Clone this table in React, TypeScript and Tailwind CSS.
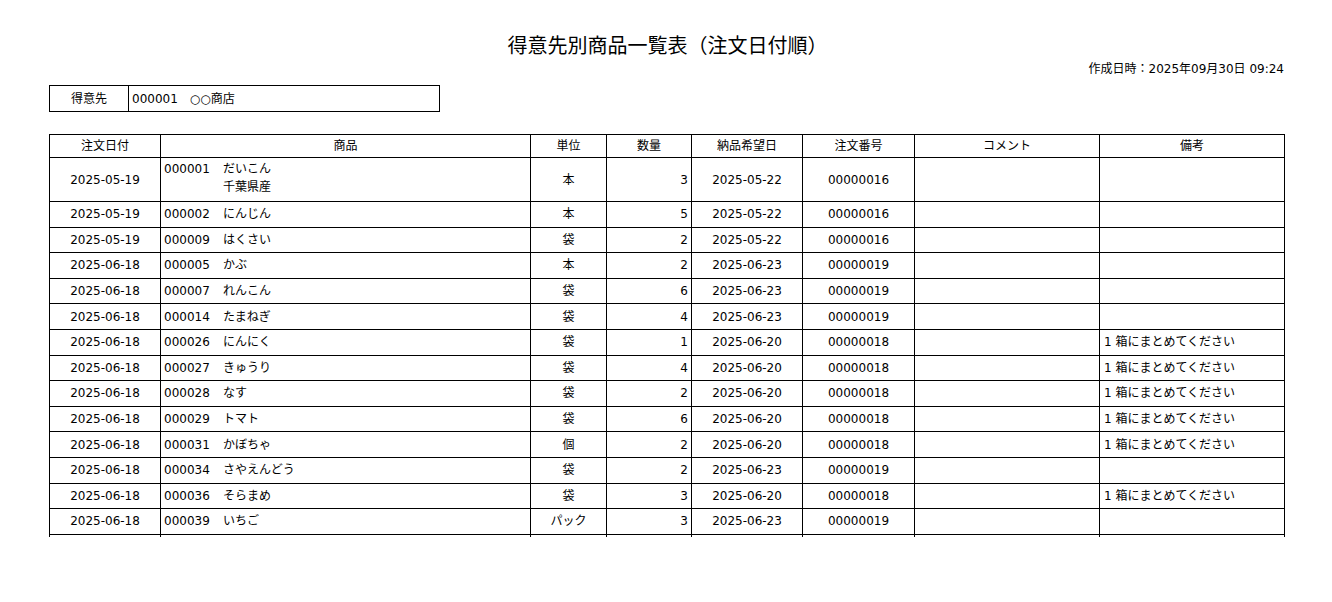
const rows = [
  { date: "2025-05-19", code: "000001", name: ["だいこん", "千葉県産"], unit: "本", qty: 3, due: "2025-05-22", no: "00000016", note: "" },
  { date: "2025-05-19", code: "000002", name: ["にんじん"], unit: "本", qty: 5, due: "2025-05-22", no: "00000016", note: "" },
  { date: "2025-05-19", code: "000009", name: ["はくさい"], unit: "袋", qty: 2, due: "2025-05-22", no: "00000016", note: "" },
  { date: "2025-06-18", code: "000005", name: ["かぶ"], unit: "本", qty: 2, due: "2025-06-23", no: "00000019", note: "" },
  { date: "2025-06-18", code: "000007", name: ["れんこん"], unit: "袋", qty: 6, due: "2025-06-23", no: "00000019", note: "" },
  { date: "2025-06-18", code: "000014", name: ["たまねぎ"], unit: "袋", qty: 4, due: "2025-06-23", no: "00000019", note: "" },
  { date: "2025-06-18", code: "000026", name: ["にんにく"], unit: "袋", qty: 1, due: "2025-06-20", no: "00000018", note: "1 箱にまとめてください" },
  { date: "2025-06-18", code: "000027", name: ["きゅうり"], unit: "袋", qty: 4, due: "2025-06-20", no: "00000018", note: "1 箱にまとめてください" },
  { date: "2025-06-18", code: "000028", name: ["なす"], unit: "袋", qty: 2, due: "2025-06-20", no: "00000018", note: "1 箱にまとめてください" },
  { date: "2025-06-18", code: "000029", name: ["トマト"], unit: "袋", qty: 6, due: "2025-06-20", no: "00000018", note: "1 箱にまとめてください" },
  { date: "2025-06-18", code: "000031", name: ["かぼちゃ"], unit: "個", qty: 2, due: "2025-06-20", no: "00000018", note: "1 箱にまとめてください" },
  { date: "2025-06-18", code: "000034", name: ["さやえんどう"], unit: "袋", qty: 2, due: "2025-06-23", no: "00000019", note: "" },
  { date: "2025-06-18", code: "000036", name: ["そらまめ"], unit: "袋", qty: 3, due: "2025-06-20", no: "00000018", note: "1 箱にまとめてください" },
  { date: "2025-06-18", code: "000039", name: ["いちご"], unit: "パック", qty: 3, due: "2025-06-23", no: "00000019", note: "" },
];

const headers = ["注文日付", "商品", "単位", "数量", "納品希望日", "注文番号", "コメント", "備考"];
const widths = ["w-[111px]", "w-[370px]", "w-[76px]", "w-[85px]", "w-[111px]", "w-[112px]", "w-[185px]", "w-[185px]"];

export default function App() {
  return (
    <div
      className="w-[1332px] h-[602px] bg-white text-black pl-[49px] pr-[46px] pt-[33px]"
      style={{ fontFamily: '"DejaVu Sans", "Noto Sans CJK JP", sans-serif' }}
    >
      <h1 className="text-center text-[20px] leading-[26px]">得意先別商品一覧表（注文日付順）</h1>
      <div className="text-right text-[12px] leading-[16px] mt-[2px] pr-[2px]">作成日時：2025年09月30日 09:24</div>

      {/* 得意先 */}
      <div className="mt-[8px] flex w-[391px] h-[27px] border border-black text-[12px]">
        <div className="w-[79px] border-r border-black flex items-center justify-center">得意先</div>
        <div className="flex items-center pl-[3px]">000001　○○商店</div>
      </div>

      <div className="mt-[22px] h-[403px] overflow-hidden">
        <table className="table-fixed border-collapse w-[1236px] text-[12px]">
          <colgroup>
            {widths.map((w, i) => (
              <col key={i} className={w} />
            ))}
          </colgroup>
          <thead>
            <tr className="h-[23px]">
              {headers.map((h) => (
                <th key={h} className="border border-black font-normal text-center p-0">
                  {h}
                </th>
              ))}
            </tr>
          </thead>
          <tbody>
            {rows.map((r, i) => {
              const multi = r.name.length > 1;
              return (
                <tr key={i} className={multi ? "h-[44px]" : "h-[25.6px]"}>
                  <td className="border border-black text-center p-0">{r.date}</td>
                  <td className={`border border-black px-[3px] ${multi ? "py-[2px] align-top" : "py-0 align-middle"}`}>
                    <div className="flex leading-[18px]">
                      <span className="w-[59px] shrink-0">{r.code}</span>
                      <div>
                        {r.name.map((n) => (
                          <div key={n}>{n}</div>
                        ))}
                      </div>
                    </div>
                  </td>
                  <td className="border border-black text-center p-0">{r.unit}</td>
                  <td className="border border-black text-right pr-[3px] p-0">{r.qty}</td>
                  <td className="border border-black text-center p-0">{r.due}</td>
                  <td className="border border-black text-center p-0">{r.no}</td>
                  <td className="border border-black p-0"></td>
                  <td className="border border-black pl-[4px] p-0">{r.note}</td>
                </tr>
              );
            })}
            <tr className="h-[25px]">
              {headers.map((h) => (
                <td key={h} className="border border-black p-0"></td>
              ))}
            </tr>
          </tbody>
        </table>
      </div>
    </div>
  );
}
